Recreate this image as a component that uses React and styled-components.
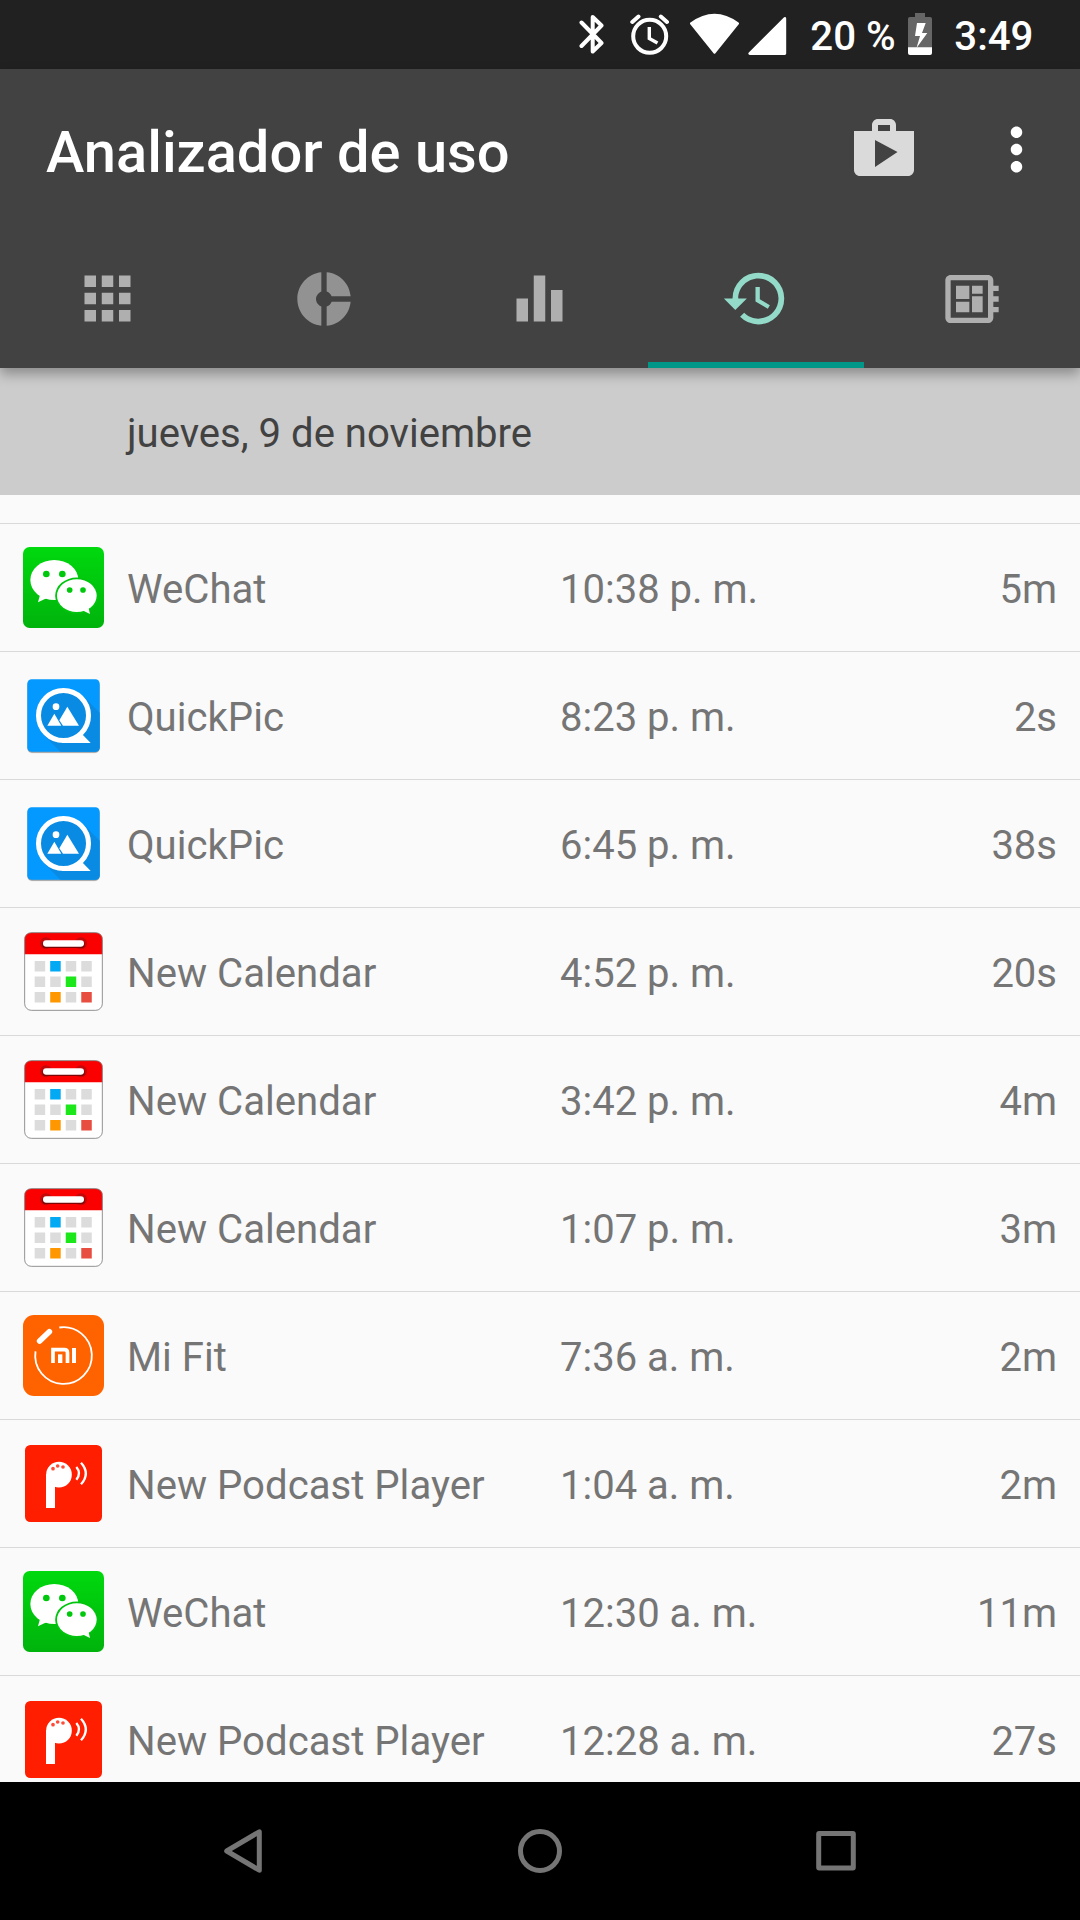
import React from 'react'
import styled, { createGlobalStyle } from 'styled-components';
import { MdApps, MdDonutSmall, MdEqualizer, MdHistory, MdDeveloperBoard, MdShop, MdMoreVert } from 'react-icons/md';

const tabs = [
    { id: 'apps', Icon: MdApps, size: 69, color: '#afafaf' },
    { id: 'donut', Icon: MdDonutSmall, size: 64, color: '#929292' },
    { id: 'stats', Icon: MdEqualizer, size: 69, color: '#afafaf' },
    { id: 'history', Icon: MdHistory, size: 69, color: '#93dac8', active: true },
    { id: 'board', Icon: MdDeveloperBoard, size: 64, color: '#afafaf' },
]

const WeChatIcon = () => (
    <AppIcon viewBox="0 0 243 243">
        <defs>
            <linearGradient id="wechat" x1="0" y1="0" x2="0" y2="1">
                <stop offset="0" stopColor="#00d90e" />
                <stop offset="1" stopColor="#00b30c" />
            </linearGradient>
        </defs>
        <rect width="243" height="243" rx="20" fill="url(#wechat)" />
        <g fill="#fff">
            <ellipse cx="94" cy="99" rx="72" ry="60" />
            <path d="M52 140L45 166L72 153Z" />
        </g>
        <ellipse cx="161.5" cy="146" rx="65" ry="54.5" fill="#00c40d" />
        <g fill="#fff">
            <ellipse cx="161.5" cy="146" rx="59.5" ry="49" />
            <path d="M178 190L201 201L196 180Z" />
        </g>
        <g fill="#00c80d">
            <circle cx="70" cy="81" r="10" />
            <circle cx="118" cy="81" r="10" />
            <circle cx="140" cy="129" r="8.5" />
            <circle cx="180" cy="129" r="8.5" />
        </g>
    </AppIcon>
)

const QuickPicIcon = () => (
    <AppIcon viewBox="0 0 243 243">
        <rect x="13" y="18" width="217" height="217" rx="14" fill="#000" opacity=".12" />
        <rect x="13" y="16" width="217" height="217" rx="14" fill="#000" opacity=".28" />
        <rect x="13" y="13" width="217" height="217" rx="13" fill="#0499ff" />
        <path d="M180 62L230 113V217Q230 230 217 230H112L63 180Z" fill="#0a8be3" />
        <circle cx="121.5" cy="121.5" r="75" fill="#0a8be3" stroke="#fff" strokeWidth="15" />
        <g fill="#fff">
            <path d="M118 204H203L179 179L150 189H118Z" />
            <circle cx="99" cy="95" r="10" />
            <path d="M73 152L94 116L115 152Z" />
            <path d="M120 152L109 136L133 95L168 152Z" />
        </g>
    </AppIcon>
)

const cellColors = {
    1: '#04a9f4',
    6: '#1be71b',
    9: '#ff9800',
    11: '#e84e40',
}

const CalendarIcon = () => (
    <AppIcon viewBox="0 0 243 243">
        <rect x="5" y="5" width="233" height="233" rx="20" fill="#fff" />
        <path d="M5 70V25Q5 5 25 5H218Q238 5 238 25V70Z" fill="#fb0000" />
        <rect x="5" y="5" width="233" height="233" rx="20" fill="none" stroke="#777" strokeOpacity=".8" strokeWidth="3" />
        <circle cx="69" cy="37" r="18" fill="#c20808" />
        <circle cx="174" cy="37" r="18" fill="#c20808" />
        <rect x="58" y="30" width="127" height="21" rx="10" fill="#7c0505" />
        <rect x="60" y="28" width="123" height="19" rx="9.5" fill="#fff" />
        {Array.from({ length: 12 }, (_, i) => (
            <rect
                key={i}
                x={35 + (i % 4) * 46.6}
                y={90 + Math.floor(i / 4) * 46.5}
                width="31.5"
                height="31.5"
                fill={cellColors[i] || '#dcdcdc'}
            />
        ))}
    </AppIcon>
)

const MiFitIcon = () => (
    <AppIcon viewBox="0 0 243 243">
        <rect width="243" height="243" rx="33" fill="#ff6300" />
        <path d="M109 37.5A85 85 0 1 1 37.5 109" fill="none" stroke="#fff" strokeWidth="5.5" />
        <path d="M50 78L79 50" stroke="#fff" strokeWidth="17" strokeLinecap="round" />
        <path d="M90 144V104H124Q133.5 104 133.5 113V144" fill="none" stroke="#fff" strokeWidth="11" />
        <rect x="105" y="118" width="13" height="26" fill="#fff" />
        <rect x="147" y="99" width="12" height="45" fill="#fff" />
    </AppIcon>
)

const PodcastIcon = () => (
    <AppIcon viewBox="0 0 243 243">
        <rect x="6" y="6" width="231" height="231" rx="16" fill="#ff1e00" />
        <circle cx="108" cy="95" r="38.5" fill="#fff" />
        <rect x="69" y="93" width="27" height="102" fill="#fff" />
        <g fill="#ff4b38">
            <circle cx="90" cy="77" r="5.5" />
            <circle cx="104" cy="69" r="5.5" />
            <circle cx="120" cy="72" r="5.5" />
        </g>
        <g fill="none" stroke="#fff" strokeWidth="7">
            <path d="M160 72Q176 91 160 110" />
            <path d="M174 59Q203 91 174 124" />
        </g>
    </AppIcon>
)

const apps = {
    wechat: { name: 'WeChat', Icon: WeChatIcon },
    quickpic: { name: 'QuickPic', Icon: QuickPicIcon },
    calendar: { name: 'New Calendar', Icon: CalendarIcon },
    mifit: { name: 'Mi Fit', Icon: MiFitIcon },
    podcast: { name: 'New Podcast Player', Icon: PodcastIcon },
}

const entries = [
    { app: 'wechat', time: '10:38 p. m.', duration: '5m' },
    { app: 'quickpic', time: '8:23 p. m.', duration: '2s' },
    { app: 'quickpic', time: '6:45 p. m.', duration: '38s' },
    { app: 'calendar', time: '4:52 p. m.', duration: '20s' },
    { app: 'calendar', time: '3:42 p. m.', duration: '4m' },
    { app: 'calendar', time: '1:07 p. m.', duration: '3m' },
    { app: 'mifit', time: '7:36 a. m.', duration: '2m' },
    { app: 'podcast', time: '1:04 a. m.', duration: '2m' },
    { app: 'wechat', time: '12:30 a. m.', duration: '11m' },
    { app: 'podcast', time: '12:28 a. m.', duration: '27s' },
]

const StatusIcons = () => (
    <>
        <StatusIcon width="25" height="43" $gap={26}>
            <path d="M2.5 9.5L22.5 30L13.7 38.5V4L22.5 12.5L2.5 33" fill="none" stroke="#fff" strokeWidth="4" strokeLinecap="round" strokeLinejoin="round" />
        </StatusIcon>
        <StatusIcon width="40" height="43" $gap={20}>
            <g fill="none" stroke="#fff" strokeWidth="4">
                <circle cx="19.7" cy="23.3" r="16.5" />
                <path d="M2.3 9L8.5 3.5M37 9L30.8 3.5" strokeLinecap="round" />
                <path d="M19.3 14V25.5L27.5 30" strokeWidth="3.4" />
            </g>
        </StatusIcon>
        <StatusIcon width="50" height="43" $gap={8}>
            <path d="M1.2 10.5Q24.5 -6.5 47.8 10.5L24.5 39.5Z" fill="#fff" stroke="#fff" strokeWidth="2.4" strokeLinejoin="round" />
        </StatusIcon>
        <StatusIcon width="39" height="43" $gap={23}>
            <path d="M1.8 40.5H36.8V5.5Z" fill="#fff" stroke="#fff" strokeWidth="2.8" strokeLinejoin="round" />
        </StatusIcon>
    </>
)

const BatteryIcon = () => (
    <StatusIcon width="24" height="43" $gap={22}>
        <path d="M7 0H17V4H22Q24 4 24 6V35H0V6Q0 4 2 4H7Z" fill="#666" />
        <path d="M0 34.3H24V40Q24 42 22 42H2Q0 42 0 40Z" fill="#fff" />
        <path d="M9 10H17.7L14 20H19.3L8.5 35L12 23H7Z" fill="#fff" />
    </StatusIcon>
)

const App = () => {
    return (
        <Screen>
            <GlobalStyle />
            <StatusBar>
                <StatusIcons />
                <StatusText $gap={12.5}>20 %</StatusText>
                <BatteryIcon />
                <StatusText>3:49</StatusText>
            </StatusBar>
            <Header>
                <Toolbar>
                    <Title>Analizador de uso</Title>
                    <MdShop size={72} color="#dadada" />
                    <MdMoreVert size={69} color="#fff" />
                </Toolbar>
                <TabBar>
                    {tabs.map(({ id, Icon, size, color, active }) => (
                        <Tab key={id} $active={active} $nudge={size === 69}>
                            <Icon size={size} color={color} />
                        </Tab>
                    ))}
                </TabBar>
            </Header>
            <DateHeader>jueves, 9 de noviembre</DateHeader>
            <List>
                {entries.map(({ app, time, duration }) => {
                    const { name, Icon } = apps[app]
                    return (
                        <Row key={time}>
                            <Icon />
                            <Name>{name}</Name>
                            <span>{time}</span>
                            <Duration>{duration}</Duration>
                        </Row>
                    )
                })}
            </List>
            <NavBar>
                <svg width="44" height="44">
                    <path d="M5.7 22L38.3 2.8V41.2Z" />
                </svg>
                <svg width="44" height="44">
                    <circle cx="22" cy="22" r="19.5" />
                </svg>
                <svg width="44" height="44">
                    <rect x="3.7" y="4.4" width="34.6" height="34.6" rx=".5" />
                </svg>
            </NavBar>
        </Screen>
    )
}

export default App

const GlobalStyle = createGlobalStyle`
    body {
        margin: 0;
        background: #fafafa;
    }
    * {
        box-sizing: border-box;
    }
    svg {
        display: block;
        flex-shrink: 0;
    }
`;

const Screen = styled.div`
    display: flex;
    flex-direction: column;
    width: 1080px;
    height: 1920px;
    overflow: hidden;
    background: #fafafa;
    color: #757575;
    font-family: Roboto, sans-serif;
    font-size: 40px;
`;

const StatusBar = styled.div`
    display: flex;
    align-items: center;
    justify-content: flex-end;
    height: 69px;
    flex-shrink: 0;
    padding-right: 46.5px;
    background: #212121;
    color: #fff;
    font-size: 40.25px;
`;

const StatusIcon = styled.svg`
    margin-right: ${({ $gap }) => $gap}px;
`;

const StatusText = styled.span`
    margin-right: ${({ $gap = 0 }) => $gap}px;
    padding-top: 3px;
    font-weight: 500;
    white-space: nowrap;
`;

const Header = styled.header`
    height: 299px;
    flex-shrink: 0;
    background: #424242;
    z-index: 1;
    box-shadow: 0 6px 12px rgba(0, 0, 0, 0.32);
`;

const Toolbar = styled.div`
    display: flex;
    align-items: center;
    height: 161px;
    padding: 0 29px 1px 46px;
    gap: 62px;
`;

const Title = styled.h1`
    flex: 1;
    margin: 0;
    padding-top: 6px;
    color: #fff;
    font-size: 57.8px;
    font-weight: 500;
`;

const TabBar = styled.nav`
    display: grid;
    grid-template-columns: repeat(5, 1fr);
    height: 138px;
`;

const Tab = styled.div`
    display: flex;
    align-items: center;
    justify-content: center;
    padding: ${({ $nudge }) => $nudge ? '0 1px 1px 0' : '0'};
    box-shadow: ${({ $active }) => $active ? 'inset 0 -6px #009688' : 'none'};
`;

const DateHeader = styled.div`
    height: 127px;
    flex-shrink: 0;
    padding-left: 127px;
    background: #ccc;
    color: #424242;
    font-size: 40.1px;
    line-height: 132px;
`;

const List = styled.div`
    flex: 1;
    min-height: 0;
    overflow: hidden;
    padding-top: 28px;
`;

const Row = styled.div`
    display: grid;
    grid-template-columns: 104px 433px 1fr auto;
    align-items: center;
    height: 128px;
    padding: 0 23px;
    border-top: 1px solid #d9d9d9;
    line-height: 47px;
    span {
        padding-top: 3px;
    }
`;

const AppIcon = styled.svg`
    width: 81px;
    height: 81px;
`;

const Name = styled.span`
    font-size: 40.15px;
`;

const Duration = styled.span`
    text-align: right;
`;

const NavBar = styled.footer`
    display: flex;
    align-items: center;
    justify-content: center;
    gap: 253px;
    height: 138px;
    flex-shrink: 0;
    background: #000;
    svg {
        fill: none;
        stroke: #757575;
        stroke-width: 5;
        stroke-linejoin: round;
    }
`;
